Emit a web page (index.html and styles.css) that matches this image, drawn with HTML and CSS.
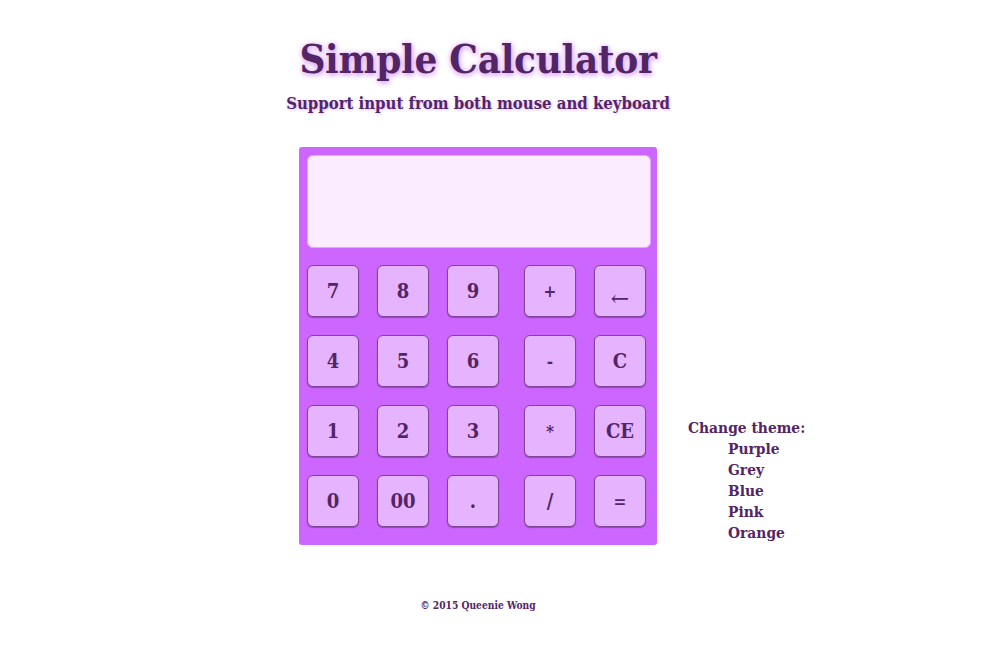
FILE: index.html
```html
<!DOCTYPE html>
<html>
<head>
<meta charset="utf-8">
<link rel="stylesheet" href="styles.css">
</head>
<body>
<div class="page">
  <header class="head">
    <h1 class="title">Simple Calculator</h1>
    <h2 class="subtitle">Support input from both mouse and keyboard</h2>
  </header>
  <div class="row">
    <div class="spacer"></div>
    <div class="calc">
      <div class="display"></div>
      <div class="keys">
        <div class="nums">
          <button class="key">7</button><button class="key">8</button><button class="key">9</button>
          <button class="key">4</button><button class="key">5</button><button class="key">6</button>
          <button class="key">1</button><button class="key">2</button><button class="key">3</button>
          <button class="key">0</button><button class="key">00</button><button class="key">.</button>
        </div>
        <div class="ops">
          <button class="key op">+</button><button class="key op arrow">&larr;</button>
          <button class="key op">-</button><button class="key">C</button>
          <button class="key op">*</button><button class="key">CE</button>
          <button class="key">/</button><button class="key op">=</button>
        </div>
      </div>
    </div>
    <div class="themes">
      <div class="themes-label">Change theme:</div>
      <ul class="theme-list">
        <li>Purple</li>
        <li>Grey</li>
        <li>Blue</li>
        <li>Pink</li>
        <li>Orange</li>
      </ul>
    </div>
  </div>
  <footer class="foot">&copy; 2015 Queenie Wong</footer>
</div>
</body>
</html>
```
FILE: styles.css
```css
html, body {
  margin: 0;
  padding: 0;
  background: #ffffff;
}
body {
  font-family: "DejaVu Serif", "Liberation Serif", serif;
  font-stretch: condensed;
  color: #532565;
}
.page {
  width: 956px;
  display: flex;
  flex-direction: column;
  align-items: center;
}
.head {
  text-align: center;
  padding-top: 34px;
}
.title {
  margin: 0;
  font-size: 40px;
  line-height: 50px;
  font-weight: bold;
  letter-spacing: -0.3px;
  text-shadow: 1px 2px 5px #d9a3ff, 0 0 6px #e6c2ff;
}
.subtitle {
  margin: 8px 0 0 0;
  font-size: 16.6px;
  line-height: 22px;
  font-weight: bold;
  text-shadow: 1px 1px 3px #e0b3ff;
}
.row {
  margin-top: 33px;
  width: 100%;
  display: grid;
  grid-template-columns: 1fr auto 1fr;
  align-items: end;
}
.calc {
  width: 358px;
  box-sizing: border-box;
  background: #cc66ff;
  border-radius: 3px;
  padding: 8px 11px 18px 8px;
}
.display {
  height: 91px;
  background: #fbedff;
  border: 1px solid #e3a8ff;
  border-radius: 6px;
  margin-right: -5px;
}
.keys {
  margin-top: 17px;
  display: flex;
  gap: 25px;
}
.nums {
  display: grid;
  grid-template-columns: repeat(3, 52px);
  gap: 18px;
}
.ops {
  display: grid;
  grid-template-columns: repeat(2, 52px);
  gap: 18px;
}
.key {
  width: 52px;
  height: 52px;
  margin: 0;
  padding: 0;
  box-sizing: border-box;
  background: #e6b3ff;
  border: 1px solid #80449a;
  border-radius: 6px;
  box-shadow: 0 1px 1px rgba(83, 37, 101, 0.5);
  font-family: "DejaVu Serif", "Liberation Serif", serif;
  font-stretch: condensed;
  font-weight: bold;
  font-size: 20px;
  color: #532565;
}
.op {
  font-size: 17px;
}
.arrow {
  font-size: 22px;
  font-weight: normal;
  font-stretch: normal;
  padding-top: 14px;
}
.themes {
  margin-left: 31px;
  font-size: 15.4px;
  line-height: 21px;
  font-weight: bold;
  padding-bottom: 1px;
}
.themes-label {
  margin: 0;
}
.theme-list {
  margin: 0;
  padding-left: 40px;
  list-style: none;
}
.foot {
  margin-top: 53px;
  font-size: 10.2px;
  font-weight: bold;
  line-height: 14px;
}
```
